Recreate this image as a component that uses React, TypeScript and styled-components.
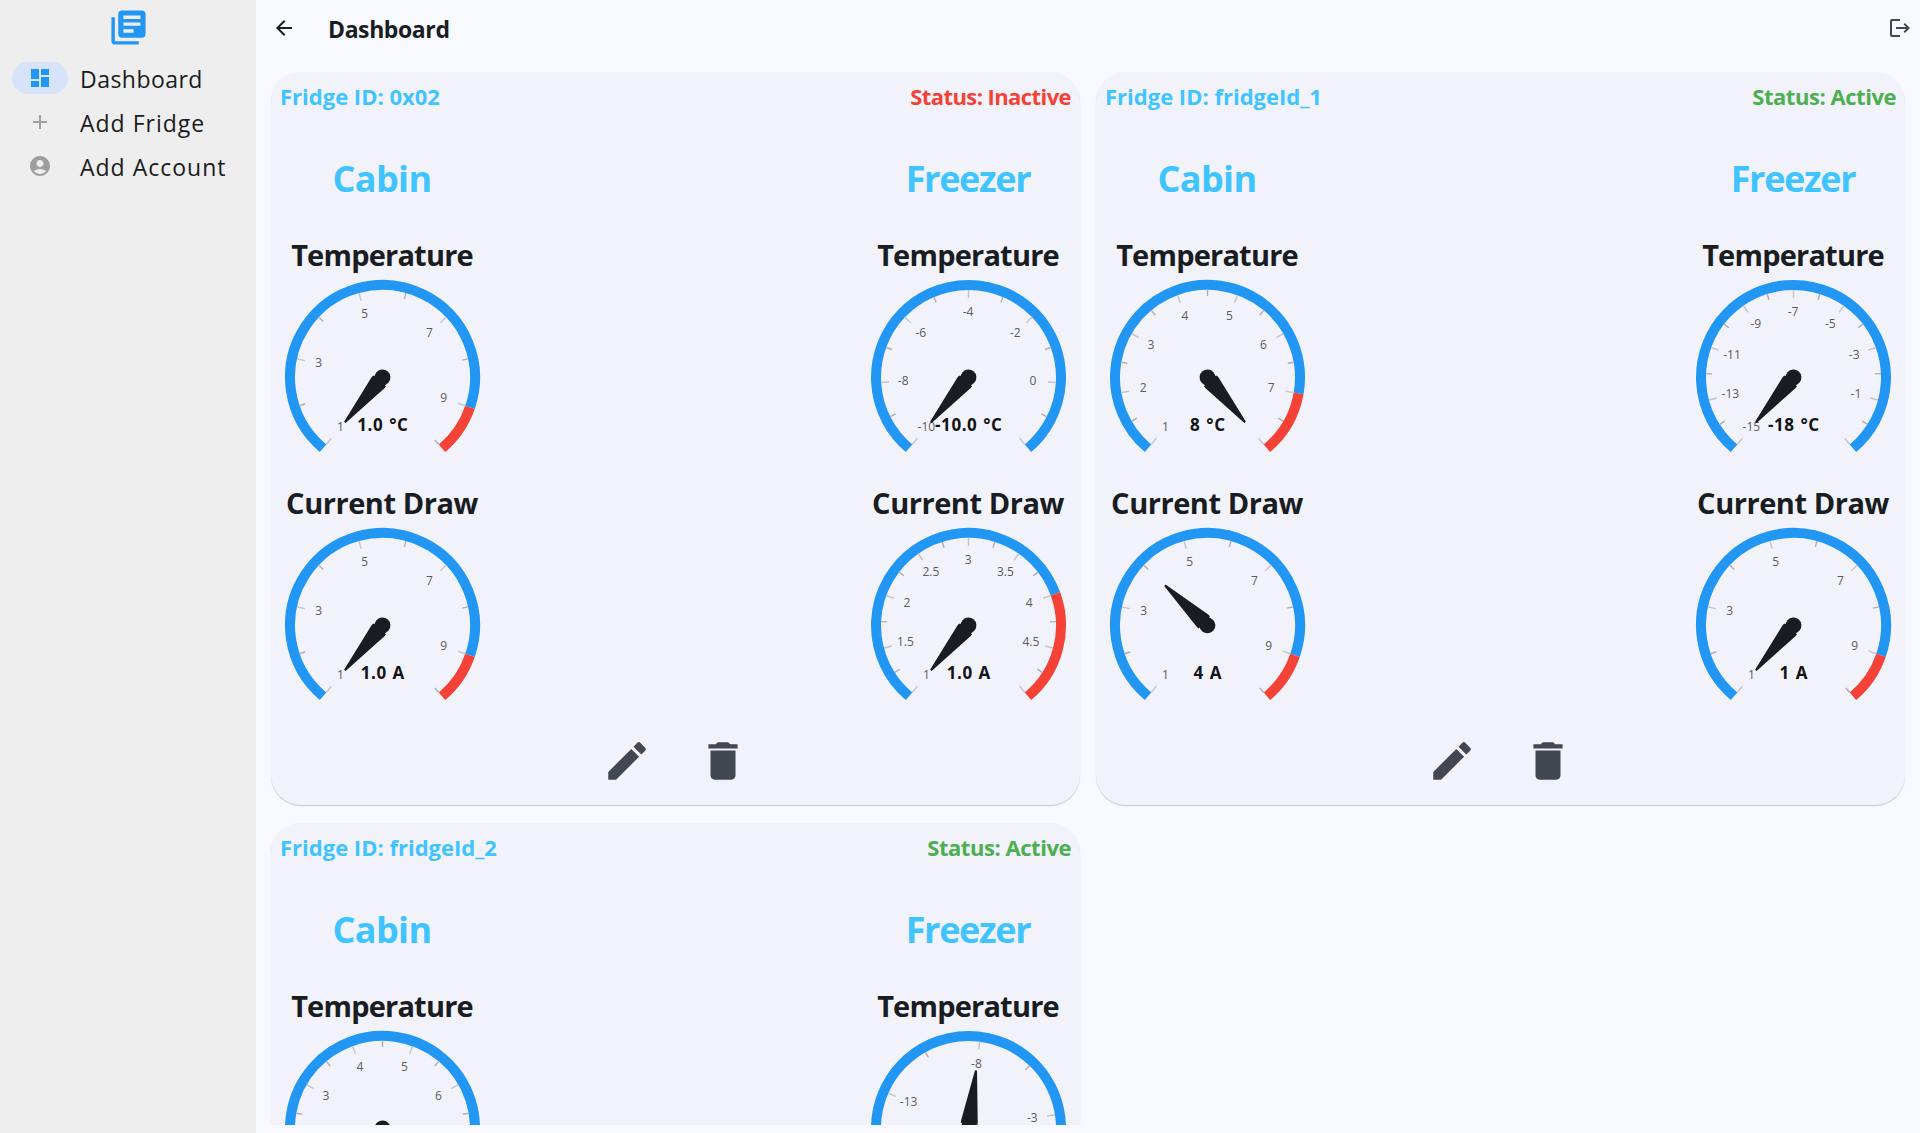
import React from "react";
import styled, { createGlobalStyle } from "styled-components";
import {
  MdAccountCircle,
  MdAdd,
  MdArrowBack,
  MdDashboard,
  MdDelete,
  MdEdit,
  MdLibraryBooks,
  MdLogout,
} from "react-icons/md";

const BLUE = "#2196f3";
const SKY = "#40c4ff";
const RED = "#f44336";
const GREEN = "#4caf50";
const INK = "#191c20";
const MUTED = "#43474e";

const GlobalStyle = createGlobalStyle`
  * { box-sizing: border-box; }
  body {
    margin: 0;
    overflow: hidden;
    background: #f8f9ff;
    color: ${INK};
    font-family: "Open Sans", "Noto Sans", sans-serif;
  }
  svg { display: block; }
`;

const Shell = styled.div`
  display: flex;
  height: 100vh;
`;

const Sidebar = styled.aside`
  flex: 0 0 256px;
  background: #eeeeee;
`;

const Logo = styled.div`
  display: flex;
  justify-content: center;
  padding-top: 7px;
  height: 56px;
  font-size: 41px;
  color: ${BLUE};
`;

const Nav = styled.nav`
  display: flex;
  flex-direction: column;
`;

const NavItem = styled.a`
  display: flex;
  align-items: center;
  gap: 12px;
  height: 44px;
  padding-left: 12px;
`;

const NavPill = styled.span<{ $active?: boolean }>`
  display: flex;
  align-items: center;
  justify-content: center;
  width: 56px;
  height: 32px;
  border-radius: 16px;
  font-size: 24px;
  color: ${(p) => (p.$active ? BLUE : "#9e9e9e")};
  background: ${(p) => (p.$active ? "#d7e3f8" : "transparent")};
`;

const NavLabel = styled.span<{ $tracking: number }>`
  font-size: 23px;
  font-weight: 500;
  line-height: 32px;
  padding-top: 2px;
  letter-spacing: ${(p) => p.$tracking}px;
`;

const Main = styled.main`
  flex: 1;
  display: flex;
  flex-direction: column;
  min-width: 0;
  padding-bottom: 8px;
`;

const TopBar = styled.header`
  display: flex;
  align-items: center;
  flex: 0 0 56px;
  padding: 0 8px 0 16px;
`;

const BarIcon = styled.button<{ $color: string }>`
  border: 0;
  padding: 0;
  background: none;
  font-size: 24px;
  color: ${(p) => p.$color};
`;

const Title = styled.h1`
  flex: 1;
  margin: 1px 0 0 32px;
  font-size: 23px;
  line-height: 30px;
  letter-spacing: -0.4px;
`;

const Scroll = styled.div`
  flex: 1;
  min-height: 0;
  overflow: hidden;
  padding: 16px 15px 0;
`;

const Grid = styled.div`
  display: grid;
  grid-template-columns: 1fr 1fr;
  gap: 18px 16px;
`;

const Card = styled.section`
  height: 733px;
  padding-top: 8px;
  border-radius: 30px;
  background: #f2f2fb;
  box-shadow: 0 1px 1px rgba(0, 0, 0, 0.2);
`;

const CardHeader = styled.div`
  display: flex;
  justify-content: space-between;
  padding: 0 9px;
  font-size: 22px;
  font-weight: 700;
  line-height: 33px;
`;

const FridgeId = styled.span`
  color: ${SKY};
`;

const Status = styled.span<{ $active: boolean }>`
  color: ${(p) => (p.$active ? GREEN : RED)};
  letter-spacing: ${(p) => (p.$active ? -0.46 : -0.58)}px;
`;

const Sections = styled.div`
  display: flex;
  justify-content: space-between;
  padding: 42px 12px 0 11px;
`;

const Column = styled.div`
  width: 200px;
  display: flex;
  flex-direction: column;
  align-items: center;
`;

const SectionTitle = styled.h2<{ $tracking: number }>`
  margin: 0 0 32px;
  font-size: 36px;
  line-height: 48px;
  color: ${SKY};
  letter-spacing: ${(p) => p.$tracking}px;
`;

const GaugeBlock = styled.div`
  height: 248px;
  display: flex;
  flex-direction: column;
  align-items: center;
`;

const GaugeTitle = styled.h3<{ $tracking: number }>`
  margin: 0;
  font-size: 29px;
  line-height: 40px;
  white-space: nowrap;
  letter-spacing: ${(p) => p.$tracking}px;
`;

const TickText = styled.text`
  font-size: 12px;
  fill: #5a5c60;
  text-anchor: middle;
`;

const ValueText = styled.text`
  font-size: 17px;
  font-weight: 700;
  letter-spacing: 0.55px;
  word-spacing: 1px;
  fill: #111417;
  text-anchor: middle;
`;

const Actions = styled.div`
  display: flex;
  justify-content: center;
  gap: 46px;
  padding: 5px 1px 0 0;
  font-size: 50px;
  color: ${MUTED};
`;

interface GaugeData {
  min: number;
  max: number;
  step: number;
  value: number;
  text: string;
  redFrom?: number;
}

interface Fridge {
  id: string;
  active: boolean;
  cabin: [GaugeData, GaugeData];
  freezer: [GaugeData, GaugeData];
}

const START = 130;
const SWEEP = 280;
const RADIUS = 97.5;
const BAND = 10;

const point = (deg: number, r: number): [number, number] => {
  const a = (deg * Math.PI) / 180;
  return [Math.cos(a) * r, Math.sin(a) * r];
};

const arc = (from: number, to: number) => {
  const r = RADIUS - BAND / 2;
  const [x1, y1] = point(from, r);
  const [x2, y2] = point(to, r);
  return `M${x1} ${y1}A${r} ${r} 0 ${to - from > 180 ? 1 : 0} 1 ${x2} ${y2}`;
};

function Gauge({ min, max, step, value, text, redFrom }: GaugeData) {
  const angle = (v: number) =>
    START + (SWEEP * (Math.min(Math.max(v, min), max) - min)) / (max - min);
  const end = START + SWEEP;
  const split = redFrom === undefined ? end : angle(redFrom);
  const count = Math.round(((max - min) / step) * 2);
  const ticks = Array.from({ length: count + 1 }, (_, i) => ({
    v: min + (i * step) / 2,
    major: i % 2 === 0,
  })).filter((t) => t.v <= max + 0.001);

  return (
    <svg width="200" height="200" viewBox="-100.5 -102.4 200 200">
      <path d={arc(START, split)} fill="none" stroke={BLUE} strokeWidth={BAND} />
      {redFrom !== undefined && (
        <path d={arc(split, end)} fill="none" stroke={RED} strokeWidth={BAND} />
      )}
      {ticks.map(({ v, major }) => {
        const [x1, y1] = point(angle(v), RADIUS - BAND);
        const [x2, y2] = point(angle(v), RADIUS - BAND - (major ? 8 : 6));
        return (
          <line
            key={v}
            x1={x1}
            y1={y1}
            x2={x2}
            y2={y2}
            stroke={major ? "#c3c3ca" : "#adadb3"}
            strokeWidth={1.4}
          />
        );
      })}
      {ticks
        .filter((t) => t.major && t.v < max)
        .map(({ v }) => {
          const [x, y] = point(angle(v), 65);
          return (
            <TickText key={v} x={x - 0.4} y={y + 3.7}>
              {v}
            </TickText>
          );
        })}
      <g transform={`rotate(${angle(value)})`} fill={INK}>
        <path d="M4.5 -8.4L7 -8.4L58.6 -1V1L7 8.4L4.5 8.4L4.5 7L0 7V-7L4.5 -7Z" />
        <circle r="7.9" />
      </g>
      <ValueText x="0.3" y="53.4">
        {text}
      </ValueText>
    </svg>
  );
}

const current = (value: number, text: string): GaugeData => ({
  min: 1,
  max: 10,
  step: 2,
  value,
  text,
  redFrom: 9,
});

const cabinTemp: GaugeData = { min: 1, max: 8, step: 1, value: 8, text: "8 °C", redFrom: 7 };

const fridges: Fridge[] = [
  {
    id: "0x02",
    active: false,
    cabin: [current(1, "1.0 °C"), current(1, "1.0 A")],
    freezer: [
      { min: -10, max: 2, step: 2, value: -10, text: "-10.0 °C" },
      { min: 1, max: 5, step: 0.5, value: 1, text: "1.0 A", redFrom: 4 },
    ],
  },
  {
    id: "fridgeId_1",
    active: true,
    cabin: [cabinTemp, current(4, "4 A")],
    freezer: [{ min: -15, max: 1, step: 2, value: -18, text: "-18 °C" }, current(1, "1 A")],
  },
  {
    id: "fridgeId_2",
    active: true,
    cabin: [cabinTemp, current(4, "4 A")],
    freezer: [{ min: -18, max: 1, step: 5, value: -8, text: "-8 °C" }, current(1, "1 A")],
  },
];

function Section({
  title,
  tracking,
  gauges,
}: {
  title: string;
  tracking: number;
  gauges: [GaugeData, GaugeData];
}) {
  return (
    <Column>
      <SectionTitle $tracking={tracking}>{title}</SectionTitle>
      <GaugeBlock>
        <GaugeTitle $tracking={-0.8}>Temperature</GaugeTitle>
        <Gauge {...gauges[0]} />
      </GaugeBlock>
      <GaugeBlock>
        <GaugeTitle $tracking={-0.45}>Current Draw</GaugeTitle>
        <Gauge {...gauges[1]} />
      </GaugeBlock>
    </Column>
  );
}

function FridgeCard({ fridge }: { fridge: Fridge }) {
  return (
    <Card>
      <CardHeader>
        <FridgeId>Fridge ID: {fridge.id}</FridgeId>
        <Status $active={fridge.active}>Status: {fridge.active ? "Active" : "Inactive"}</Status>
      </CardHeader>
      <Sections>
        <Section title="Cabin" tracking={-0.6} gauges={fridge.cabin} />
        <Section title="Freezer" tracking={-1.3} gauges={fridge.freezer} />
      </Sections>
      <Actions>
        <MdEdit />
        <MdDelete />
      </Actions>
    </Card>
  );
}

export default function App() {
  return (
    <Shell>
      <GlobalStyle />
      <Sidebar>
        <Logo>
          <MdLibraryBooks />
        </Logo>
        <Nav>
          <NavItem>
            <NavPill $active>
              <MdDashboard />
            </NavPill>
            <NavLabel $tracking={0.46}>Dashboard</NavLabel>
          </NavItem>
          <NavItem>
            <NavPill>
              <MdAdd />
            </NavPill>
            <NavLabel $tracking={1}>Add Fridge</NavLabel>
          </NavItem>
          <NavItem>
            <NavPill>
              <MdAccountCircle />
            </NavPill>
            <NavLabel $tracking={1}>Add Account</NavLabel>
          </NavItem>
        </Nav>
      </Sidebar>
      <Main>
        <TopBar>
          <BarIcon $color={INK}>
            <MdArrowBack />
          </BarIcon>
          <Title>Dashboard</Title>
          <BarIcon $color={MUTED}>
            <MdLogout />
          </BarIcon>
        </TopBar>
        <Scroll>
          <Grid>
            {fridges.map((f) => (
              <FridgeCard key={f.id} fridge={f} />
            ))}
          </Grid>
        </Scroll>
      </Main>
    </Shell>
  );
}
